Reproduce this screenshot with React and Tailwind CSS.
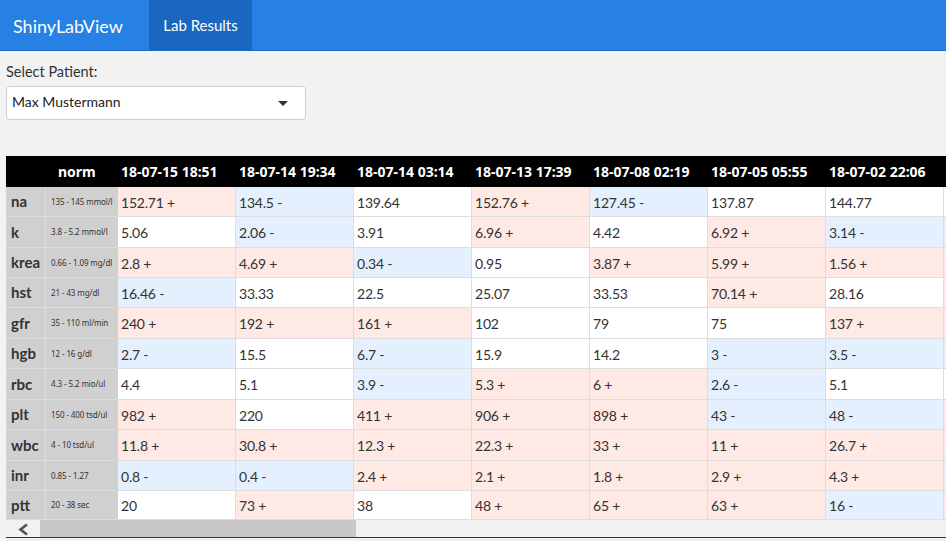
const DATES = ["18-07-15 18:51", "18-07-14 19:34", "18-07-14 03:14", "18-07-13 17:39", "18-07-08 02:19", "18-07-05 05:55", "18-07-02 22:06"];

const ROWS = [
  { name: "na", norm: "135 - 145 mmol/l", values: ["152.71 +", "134.5 -", "139.64", "152.76 +", "127.45 -", "137.87", "144.77"], next: "bg-white", h: "h-[30px]" },
  { name: "k", norm: "3.8 - 5.2 mmol/l", values: ["5.06", "2.06 -", "3.91", "6.96 +", "4.42", "6.92 +", "3.14 -"], next: "bg-[#e4f0fe]", h: "h-[31px]" },
  { name: "krea", norm: "0.66 - 1.09 mg/dl", values: ["2.8 +", "4.69 +", "0.34 -", "0.95", "3.87 +", "5.99 +", "1.56 +"], next: "bg-[#fee9e4]", h: "h-[30px]" },
  { name: "hst", norm: "21 - 43 mg/dl", values: ["16.46 -", "33.33", "22.5", "25.07", "33.53", "70.14 +", "28.16"], next: "bg-[#fee9e4]", h: "h-[30px]" },
  { name: "gfr", norm: "35 - 110 ml/min", values: ["240 +", "192 +", "161 +", "102", "79", "75", "137 +"], next: "bg-[#fee9e4]", h: "h-[31px]" },
  { name: "hgb", norm: "12 - 16 g/dl", values: ["2.7 -", "15.5", "6.7 -", "15.9", "14.2", "3 -", "3.5 -"], next: "bg-[#e4f0fe]", h: "h-[30px]" },
  { name: "rbc", norm: "4.3 - 5.2 mio/ul", values: ["4.4", "5.1", "3.9 -", "5.3 +", "6 +", "2.6 -", "5.1"], next: "bg-white", h: "h-[31px]" },
  { name: "plt", norm: "150 - 400 tsd/ul", values: ["982 +", "220", "411 +", "906 +", "898 +", "43 -", "48 -"], next: "bg-[#fee9e4]", h: "h-[30px]" },
  { name: "wbc", norm: "4 - 10 tsd/ul", values: ["11.8 +", "30.8 +", "12.3 +", "22.3 +", "33 +", "11 +", "26.7 +"], next: "bg-[#fee9e4]", h: "h-[31px]" },
  { name: "inr", norm: "0.85 - 1.27", values: ["0.8 -", "0.4 -", "2.4 +", "2.1 +", "1.8 +", "2.9 +", "4.3 +"], next: "bg-[#e4f0fe]", h: "h-[30px]" },
  { name: "ptt", norm: "20 - 38 sec", values: ["20", "73 +", "38", "48 +", "65 +", "63 +", "16 -"], next: "bg-[#fee9e4]", h: "h-[29px]" },
];

function cellColor(value) {
  if (value.endsWith("+")) return "bg-[#fee9e4]";
  if (value.endsWith("-")) return "bg-[#e4f0fe]";
  return "bg-white";
}

export default function App() {
  return (
    <div className="h-[541px] w-[946px] overflow-hidden bg-[#f2f2f2] font-['Lato',sans-serif] text-[#333]">
      {/* navbar */}
      <div className="flex h-[51px] border-b border-[#1a6cc6] bg-[#2780e3] text-white">
        <div className="w-[149px] pl-[13px] pt-[13px] text-[18px] leading-[26px]">ShinyLabView</div>
        <div className="h-[50px] w-[103px] bg-[#1967be] pt-[15px] text-center text-[15px] leading-[20px]">Lab Results</div>
      </div>

      <div className="px-[6px] pt-[11px]">
        <div className="text-[14.5px] leading-[20px]">Select Patient:</div>
        {/* select */}
        <div className="mt-[4px] flex h-[34px] w-[300px] items-center justify-between rounded border border-[#ccc] bg-white pb-[3px] pl-[5px] pr-[17px]">
          <span className="text-[14px] text-[#222]">Max Mustermann</span>
          <span className="mt-[3px] h-0 w-0 border-x-[5px] border-t-[5px] border-x-transparent border-t-[#333]" />
        </div>

        {/* lab table */}
        <div className="mt-[36px] w-[940px] overflow-hidden">
          <div className="flex h-[31px] w-[1060px] items-center bg-black font-['Noto_Sans',sans-serif] text-[14px] font-bold text-white">
            <div className="w-[39px]" />
            <div className="w-[73px] pl-[13px]">norm</div>
            {DATES.map((date) => (
              <div key={date} className="w-[118px] pl-[3px]">{date}</div>
            ))}
          </div>
          {ROWS.map((row) => (
            <div key={row.name} className={`flex w-[1060px] ${row.h} border-b border-[#ddd]`}>
              <div className="flex w-[40px] items-center border-r border-[#ddd] bg-[#d0d0d0] pl-[5px] text-[15px] font-bold">{row.name}</div>
              <div className="flex w-[72px] items-center bg-[#d0d0d0] pl-[5px] font-['Noto_Sans',sans-serif] text-[8px] tracking-[-0.1px]">{row.norm}</div>
              {row.values.map((value, i) => (
                <div key={i} className={`flex w-[118px] items-center border-r border-[#ddd] pl-[3px] pt-px text-[14px] tracking-[-0.2px] ${cellColor(value)}`}>{value}</div>
              ))}
              <div className={`w-[118px] ${row.next}`} />
            </div>
          ))}
          {/* scrollbar */}
          <div className="flex h-[17px] bg-[#f1f1f1]">
            <div className="flex w-[34px] items-center justify-center pt-[2px]">
              <svg width="12" height="13" viewBox="0 0 12 13"><path d="M10 1.5 3.5 6.5l6.5 5" fill="none" stroke="#505050" strokeWidth="2.6" /></svg>
            </div>
            <div className="h-full w-[316px] bg-[#c8c8c8]" />
          </div>
        </div>
        <div className="h-px w-[940px] bg-[#333]" />
      </div>
    </div>
  );
}
